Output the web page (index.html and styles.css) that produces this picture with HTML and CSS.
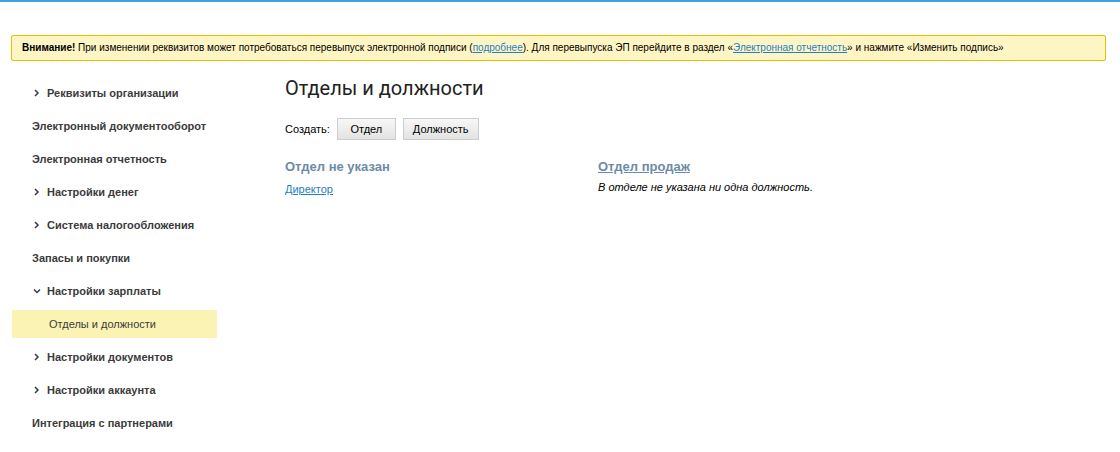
FILE: index.html
```html
<!DOCTYPE html>
<html lang="ru">
<head>
<meta charset="utf-8">
<meta name="viewport" content="width=device-width, initial-scale=1">
<title>Отделы и должности</title>
<link rel="stylesheet" href="styles.css">
</head>
<body>
<div class="page">
  <p class="notice"><strong>Внимание!</strong> При изменении реквизитов может потребоваться перевыпуск электронной подписи (<a class="link" href="#">подробнее</a>). Для перевыпуска ЭП перейдите в раздел «<a class="link" href="#">Электронная отчетность</a>» и нажмите «Изменить подпись»</p>
  <div class="layout">
    <nav class="menu">
      <a class="menu-item" href="#"><svg class="chevron" viewBox="0 0 10 10"><path d="M3 2l3 3-3 3"/></svg>Реквизиты организации</a>
      <a class="menu-item" href="#">Электронный документооборот</a>
      <a class="menu-item" href="#">Электронная отчетность</a>
      <a class="menu-item" href="#"><svg class="chevron" viewBox="0 0 10 10"><path d="M3 2l3 3-3 3"/></svg>Настройки денег</a>
      <a class="menu-item" href="#"><svg class="chevron" viewBox="0 0 10 10"><path d="M3 2l3 3-3 3"/></svg>Система налогообложения</a>
      <a class="menu-item" href="#">Запасы и покупки</a>
      <a class="menu-item" href="#"><svg class="chevron" viewBox="0 0 10 10"><path d="M2 3.5l3 3 3-3"/></svg>Настройки зарплаты</a>
      <a class="menu-item menu-item-current" href="#" aria-current="page">Отделы и должности</a>
      <a class="menu-item" href="#"><svg class="chevron" viewBox="0 0 10 10"><path d="M3 2l3 3-3 3"/></svg>Настройки документов</a>
      <a class="menu-item" href="#"><svg class="chevron" viewBox="0 0 10 10"><path d="M3 2l3 3-3 3"/></svg>Настройки аккаунта</a>
      <a class="menu-item" href="#">Интеграция с партнерами</a>
    </nav>
    <main class="content">
      <h1 class="title">Отделы и должности</h1>
      <div class="create">
        <span>Создать:</span>
        <button class="button" type="button">Отдел</button>
        <button class="button" type="button">Должность</button>
      </div>
      <div class="departments">
        <section>
          <h2 class="department">Отдел не указан</h2>
          <p class="position"><a class="link" href="#">Директор</a></p>
        </section>
        <section>
          <h2 class="department"><a class="department-link" href="#">Отдел продаж</a></h2>
          <p class="empty">В отделе не указана ни одна должность.</p>
        </section>
      </div>
    </main>
  </div>
</div>
</body>
</html>
```
FILE: styles.css
```css
* {
  box-sizing: border-box;
}

body {
  margin: 0;
  border-top: 2px solid #3fa2dc;
  background: #fff;
  color: #000;
  font: 11px/16px "Liberation Sans", Arial, sans-serif;
}

h1, h2, p {
  margin: 0;
}

.page {
  padding: 33px 14px 14px 11px;
}

.notice {
  padding: 4px 10px;
  border: 1px solid #e2c100;
  border-radius: 2px;
  background: #fef5c4;
  font-size: 10px;
}

.link {
  color: #1e80c4;
  text-decoration: underline;
}

.layout {
  display: grid;
  grid-template-columns: 205px 1fr;
  column-gap: 68px;
  padding: 18px 0 0 1px;
}

.menu {
  display: flex;
  flex-direction: column;
  gap: 5px;
}

.menu-item {
  display: flex;
  align-items: center;
  min-height: 28px;
  padding: 0 20px;
  color: #3b3b3b;
  font-weight: bold;
  text-decoration: none;
  white-space: nowrap;
}

.menu-item-current {
  padding-left: 37px;
  background: #faf3b4;
  font-weight: normal;
}

.chevron {
  width: 10px;
  height: 10px;
  margin-right: 5px;
  fill: none;
  stroke: #3b3b3b;
  stroke-width: 1.5;
}

.title {
  color: #222;
  font: 20px/18px Roboto, sans-serif;
}

.create {
  display: flex;
  align-items: center;
  gap: 7px;
  margin-top: 21px;
}

.button {
  min-width: 59px;
  height: 22px;
  padding: 0 9px;
  border: 1px solid #ccc;
  background: linear-gradient(#f7f7f7, #e3e3e3);
  color: #000;
  font: inherit;
}

.departments {
  display: grid;
  grid-template-columns: 313px 1fr;
  margin-top: 18px;
}

.department {
  color: #6d8ba8;
  font-size: 13px;
  line-height: 18px;
}

.department-link {
  color: inherit;
}

.position {
  margin-top: 5px;
}

.empty {
  margin-top: 3px;
  font-style: italic;
}
```
